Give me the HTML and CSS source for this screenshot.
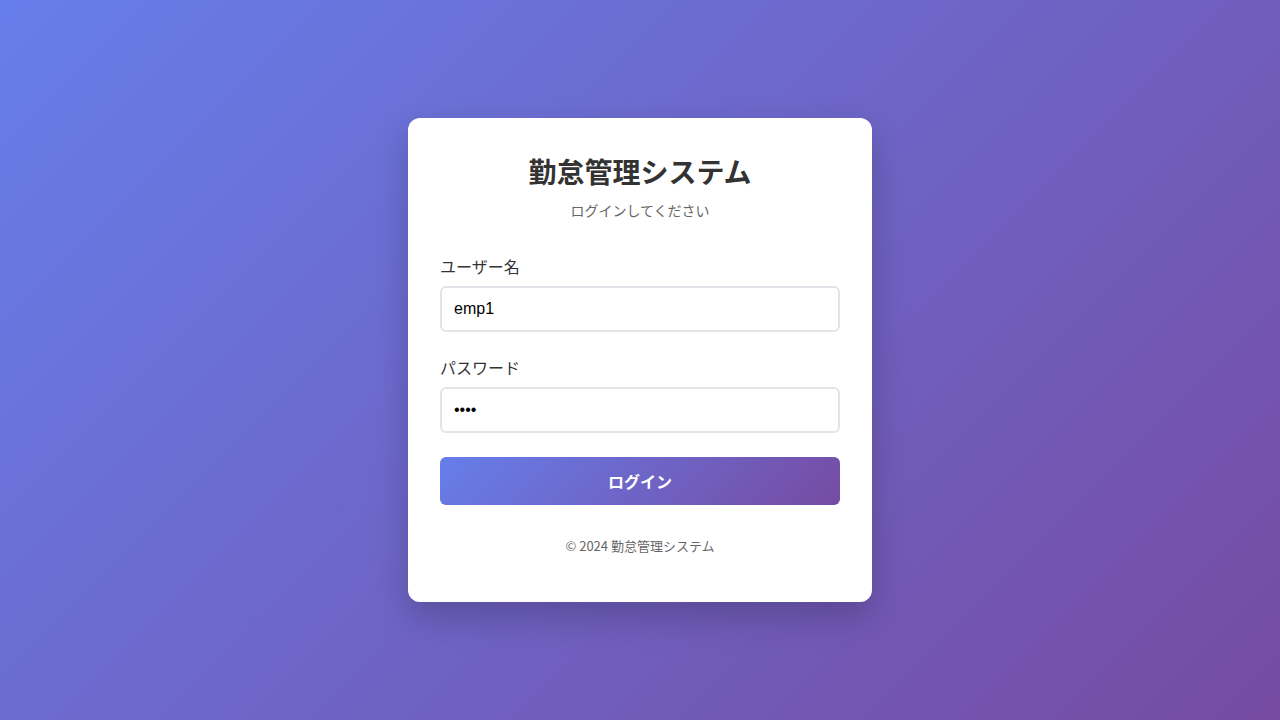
FILE: index.html
```html
<!DOCTYPE html>
<html lang="ja">
<head>
<meta charset="utf-8">
<title>勤怠管理システム - ログイン</title>
<link rel="stylesheet" href="styles.css">
</head>
<body>
<main class="page">
  <section class="card">
    <header class="card-header">
      <h1 class="title">勤怠管理システム</h1>
      <p class="subtitle">ログインしてください</p>
    </header>
    <form class="form">
      <div class="field">
        <label class="label" for="username">ユーザー名</label>
        <input class="input" id="username" type="text" value="emp1">
      </div>
      <div class="field">
        <label class="label" for="password">パスワード</label>
        <input class="input" id="password" type="password" value="pass">
      </div>
      <button class="button" type="button">ログイン</button>
    </form>
    <footer class="footer">© 2024 勤怠管理システム</footer>
  </section>
</main>
</body>
</html>
```

FILE: styles.css
```css
* { box-sizing: border-box; }
html, body { margin: 0; padding: 0; height: 100%; }
body {
  font-family: "Noto Sans CJK JP", "Noto Sans", sans-serif;
  background: linear-gradient(135deg, #667eea 0%, #764ba2 100%);
  color: #333;
}
.page {
  min-height: 100vh;
  display: flex;
  align-items: center;
  justify-content: center;
}
.card {
  width: 464px;
  background: #fff;
  border-radius: 12px;
  padding: 34px 32px 46px;
  box-shadow: 0 15px 35px rgba(0, 0, 0, 0.2);
}
.card-header {
  text-align: center;
  margin-bottom: 35px;
}
.title {
  margin: 0 0 10px;
  font-size: 28px;
  line-height: 38px;
  font-weight: 700;
  color: #333;
}
.subtitle {
  margin: 0;
  font-size: 14px;
  line-height: 20px;
  color: #666;
}
.form { display: flex; flex-direction: column; }
.field {
  display: flex;
  flex-direction: column;
  margin-bottom: 24px;
}
.label {
  font-size: 16px;
  line-height: 22px;
  color: #333;
  margin-bottom: 9px;
}
.input {
  height: 46px;
  width: 100%;
  border: 2px solid #e1e5e9;
  border-radius: 6px;
  padding: 0 12px;
  font-family: "Liberation Sans", Arial, sans-serif;
  font-size: 16px;
  color: #000;
  background: #fff;
  outline: none;
}
.button {
  height: 48px;
  width: 100%;
  border: none;
  border-radius: 6px;
  background: linear-gradient(135deg, #667eea 0%, #764ba2 100%);
  color: #fff;
  font-family: "Noto Sans CJK JP", sans-serif;
  font-size: 16px;
  font-weight: 700;
  cursor: pointer;
}
.footer {
  margin-top: 31px;
  text-align: center;
  font-size: 13px;
  line-height: 20px;
  color: #666;
}
```
